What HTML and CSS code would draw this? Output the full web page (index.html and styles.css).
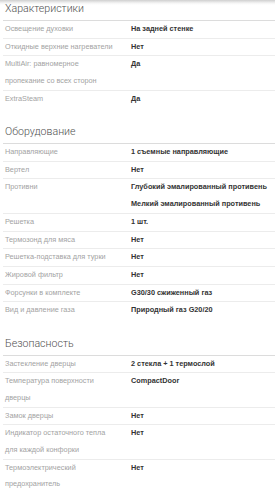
FILE: index.html
```html
<!DOCTYPE html>
<html lang="ru">
<head>
<meta charset="utf-8">
<link rel="stylesheet" href="styles.css">
</head>
<body>
<div class="specs">
  <section class="group">
    <h2 class="group-title">Характеристики</h2>
    <div class="row"><div class="label">Освещение духовки</div><div class="value">На задней стенке</div></div>
    <div class="row"><div class="label">Откидные верхние нагреватели</div><div class="value">Нет</div></div>
    <div class="row"><div class="label">MultiAir: равномерное пропекание со всех сторон</div><div class="value">Да</div></div>
    <div class="row"><div class="label">ExtraSteam</div><div class="value">Да</div></div>
  </section>
  <section class="group">
    <h2 class="group-title">Оборудование</h2>
    <div class="row"><div class="label">Направляющие</div><div class="value">1 съемные направляющие</div></div>
    <div class="row"><div class="label">Вертел</div><div class="value">Нет</div></div>
    <div class="row"><div class="label">Противни</div><div class="value">Глубокий эмалированный противень<br>Мелкий эмалированный противень</div></div>
    <div class="row"><div class="label">Решетка</div><div class="value">1 шт.</div></div>
    <div class="row"><div class="label">Термозонд для мяса</div><div class="value">Нет</div></div>
    <div class="row"><div class="label">Решетка-подставка для турки</div><div class="value">Нет</div></div>
    <div class="row"><div class="label">Жировой фильтр</div><div class="value">Нет</div></div>
    <div class="row"><div class="label">Форсунки в комплекте</div><div class="value">G30/30 сжиженный газ</div></div>
    <div class="row"><div class="label">Вид и давление газа</div><div class="value">Природный газ G20/20</div></div>
  </section>
  <section class="group">
    <h2 class="group-title">Безопасность</h2>
    <div class="row"><div class="label">Застекление дверцы</div><div class="value">2 стекла + 1 термослой</div></div>
    <div class="row"><div class="label">Температура поверхности дверцы</div><div class="value">CompactDoor</div></div>
    <div class="row"><div class="label">Замок дверцы</div><div class="value">Нет</div></div>
    <div class="row"><div class="label">Индикатор остаточного тепла для каждой конфорки</div><div class="value">Нет</div></div>
    <div class="row"><div class="label">Термоэлектрический предохранитель</div><div class="value">Нет</div></div>
  </section>
</div>
</body>
</html>
```

FILE: styles.css
```css
html, body {
  margin: 0;
  padding: 0;
  background: #fff;
}
body {
  background: linear-gradient(#cfcfcf, #f4f4f4 3px, #fff 5px) no-repeat;
  font-family: "Liberation Sans", Arial, sans-serif;
  overflow: hidden;
}
.specs {
  padding-left: 3px;
}
.group + .group {
  margin-top: 15.5px;
}
.group-title {
  margin: 0;
  padding: 1px 0 3px 2px;
  font-family: Roboto, "Liberation Sans", sans-serif;
  font-weight: 300;
  font-size: 10.6px;
  line-height: 16px;
  color: #505050;
  border-bottom: 1px solid #dcdcdc;
}
.row {
  display: grid;
  grid-template-columns: 128px 1fr;
  font-size: 7.3px;
  line-height: 16.7px;
  border-bottom: 1px solid #ececec;
}
.row:last-child {
  border-bottom: none;
}
.label {
  padding: 0 12px 0 2px;
  color: #a3a3a3;
}
.value {
  color: #333;
  font-weight: bold;
  white-space: nowrap;
}
```
